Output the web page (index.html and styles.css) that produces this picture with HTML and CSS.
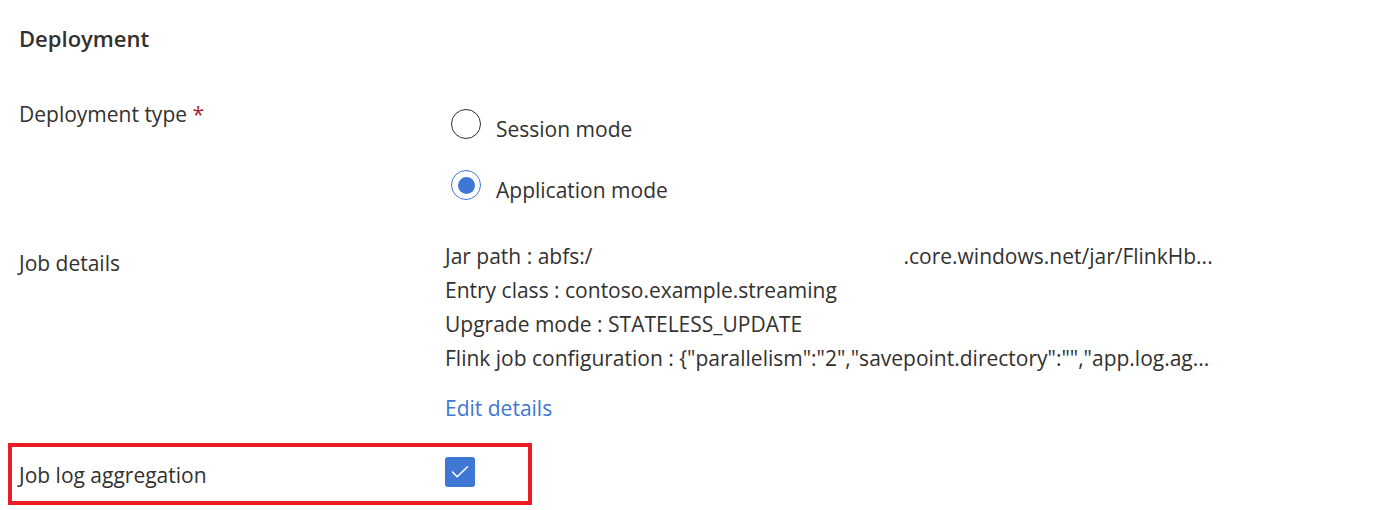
FILE: index.html
```html
<!DOCTYPE html>
<html>
<head>
<meta charset="utf-8">
<link rel="stylesheet" href="styles.css">
</head>
<body>
<div class="page">
  <h2 class="section-title">Deployment</h2>

  <div class="row row-type">
    <div class="label">Deployment type <span class="req">*</span></div>
    <div class="radios">
      <div class="radio-item"><span class="radio"></span><span class="radio-text">Session mode</span></div>
      <div class="radio-item"><span class="radio checked"></span><span class="radio-text">Application mode</span></div>
    </div>
  </div>

  <div class="row row-details">
    <div class="label label-details">Job details</div>
    <div class="details">
      <div class="line">Jar path : abfs:/<span class="redacted"></span>.core.windows.net/jar/FlinkHb...</div>
      <div class="line">Entry class : contoso.example.streaming</div>
      <div class="line">Upgrade mode : STATELESS_UPDATE</div>
      <div class="line">Flink job configuration : {"parallelism":"2","savepoint.directory":"","app.log.ag...</div>
      <a class="edit-link">Edit details</a>
    </div>
  </div>

  <div class="row row-log">
    <div class="label label-log">Job log aggregation</div>
    <div class="checkbox">
      <svg width="18" height="14" viewBox="0 0 18 14"><path d="M1.5 7 L6.2 11.8 L16.5 1.8" fill="none" stroke="#fff" stroke-width="1.6" stroke-linecap="round" stroke-linejoin="round"/></svg>
    </div>
  </div>
</div>
</body>
</html>
```

FILE: styles.css
```css
html, body {
  margin: 0;
  padding: 0;
  background: #ffffff;
}
body {
  font-family: "Open Sans", "Noto Sans", sans-serif;
  color: #323130;
  font-size: 21px;
}
.page {
  padding-left: 19px;
}
.section-title {
  margin: 0;
  padding-top: 24px;
  font-size: 22px;
  line-height: 28px;
  font-weight: 600;
}
.row {
  display: flex;
  align-items: flex-start;
}
.label {
  width: 426px;
  flex: none;
  line-height: 28px;
}
.req {
  color: #a4262c;
}
.row-type {
  margin-top: 48px;
}
.radios {
  padding-top: 9px;
  display: flex;
  flex-direction: column;
  gap: 31px;
}
.radio-item {
  display: flex;
  align-items: center;
  height: 30px;
  margin-left: 6px;
}
.radio {
  width: 30px;
  height: 30px;
  box-sizing: border-box;
  border: 1.5px solid #323130;
  border-radius: 50%;
  display: flex;
  align-items: center;
  justify-content: center;
}
.radio.checked {
  border-color: #3f78d4;
}
.radio.checked::after {
  content: "";
  width: 17px;
  height: 17px;
  border-radius: 50%;
  background: #3f78d4;
}
.radio-text {
  margin-left: 15px;
  line-height: 30px;
  padding-top: 10px;
}
.row-details {
  margin-top: 39px;
}
.label-details {
  padding-top: 10px;
}
.details {
  display: flex;
  flex-direction: column;
  align-items: flex-start;
}
.line {
  line-height: 34px;
  white-space: nowrap;
}
.redacted {
  display: inline-block;
  width: 311px;
}
.edit-link {
  margin-top: 16px;
  line-height: 34px;
  color: #3f78d4;
  cursor: pointer;
}
.row-log {
  margin-top: 18px;
  margin-left: -11px;
  width: 524px;
  height: 62px;
  box-sizing: border-box;
  border: 4px solid #ec1c24;
  padding: 0 7px;
}
.label-log {
  padding-top: 14px;
}
.checkbox {
  margin-top: 10px;
  width: 30px;
  height: 30px;
  border-radius: 3px;
  background: #3f78d4;
  display: flex;
  align-items: center;
  justify-content: center;
}
```
